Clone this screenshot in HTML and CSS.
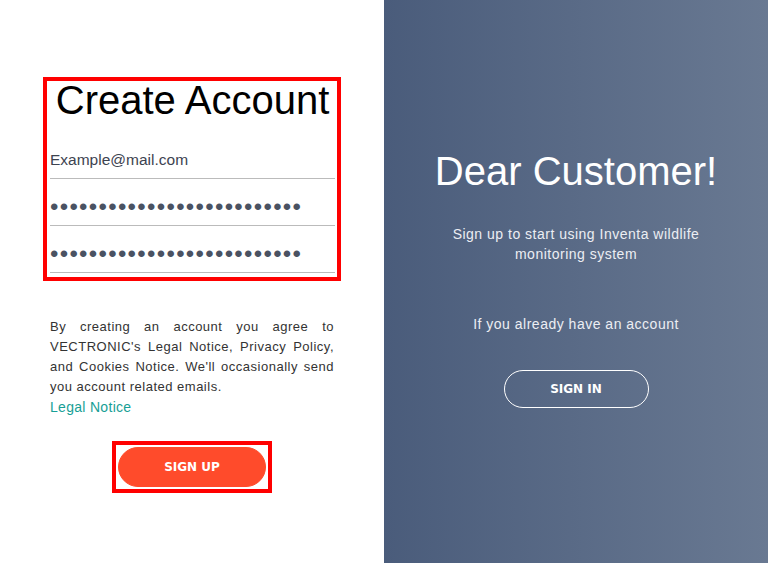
FILE: index.html
```html
<!DOCTYPE html>
<html lang="en">
<head>
    <meta charset="UTF-8">
    <meta name="viewport" content="width=device-width, initial-scale=1.0">
    <title>Create Account</title>
    <link rel="stylesheet" href="styles.css">
</head>
<body>
    <div class="container">
        <div class="sign-up">
            <form class="form-box">
                <h1>Create Account</h1>
                <input type="email" class="field" value="Example@mail.com">
                <input type="password" class="field secret" value="abcdefghijklmnopqrstuvwxyz">
                <input type="password" class="field secret" value="abcdefghijklmnopqrstuvwxyz">
            </form>

            <p class="terms">By creating an account you agree to VECTRONIC's Legal Notice, Privacy Policy, and Cookies Notice. We'll occasionally send you account related emails.</p>
            <a href="#" class="legal">Legal Notice</a>

            <div class="button-box">
                <button class="btn btn-primary">Sign Up</button>
            </div>
        </div>

        <div class="overlay">
            <h1>Dear Customer!</h1>
            <p class="intro">Sign up to start using Inventa wildlife monitoring system</p>
            <p class="already">If you already have an account</p>
            <button class="btn btn-ghost">Sign In</button>
        </div>
    </div>
</body>
</html>
```

FILE: styles.css
```css
* {
    box-sizing: border-box;
}
body {
    margin: 0;
    font-family: "Liberation Sans", Arial, sans-serif;
    background: #fff;
}
.container {
    display: flex;
    width: 768px;
    height: 563px;
}
.sign-up {
    width: 384px;
    padding: 77px 50px 0;
    display: flex;
    flex-direction: column;
}
.form-box {
    margin: 0 -7px 0 -7px;
    border: 4px solid #ff0000;
    padding: 0 2px 4px 3px;
}
.form-box h1 {
    margin: 0 0 23px;
    font-size: 40px;
    line-height: 38px;
    font-weight: normal;
    text-align: center;
    color: #000;
}
.field {
    display: block;
    width: 100%;
    height: 37px;
    margin-top: 10px;
    padding: 0;
    border: none;
    border-bottom: 1px solid #bbb;
    background: transparent;
    outline: none;
    font-family: "Liberation Sans", Arial, sans-serif;
    font-size: 15.5px;
    color: #3d4350;
}
.secret {
    font-size: 24px;
    letter-spacing: 1.3px;
    color: #4a5262;
}
.terms {
    margin: 36px 0 0;
    font-size: 13px;
    line-height: 20px;
    letter-spacing: 0.5px;
    text-align: justify;
    color: #333;
}
.legal {
    font-size: 14px;
    line-height: 20px;
    letter-spacing: 0.3px;
    color: #17a096;
    text-decoration: none;
}
.button-box {
    align-self: center;
    margin-top: 24px;
    border: 4px solid #ff0000;
    padding: 2px;
}
.btn {
    display: block;
    border-radius: 20px;
    padding: 0;
    font-family: "DejaVu Sans", Verdana, sans-serif;
    font-size: 12px;
    line-height: 14px;
    font-weight: bold;
    text-transform: uppercase;
    color: #fff;
    cursor: pointer;
}
.btn-primary {
    width: 148px;
    height: 40px;
    border: 1px solid #ff4b2b;
    background: #ff4b2b;
}
.overlay {
    width: 384px;
    padding-top: 148px;
    display: flex;
    flex-direction: column;
    align-items: center;
    text-align: center;
    color: #fff;
    background: linear-gradient(to right, #4a5c7b, #697992);
}
.overlay h1 {
    margin: 0;
    font-size: 40px;
    line-height: 46px;
    font-weight: normal;
}
.intro {
    margin: 30px 0 0;
    width: 270px;
    font-size: 14px;
    line-height: 20px;
    letter-spacing: 0.5px;
    color: #eceef3;
}
.already {
    margin: 50px 0 0;
    font-size: 14px;
    line-height: 20px;
    letter-spacing: 0.5px;
    color: #eceef3;
}
.btn-ghost {
    margin-top: 36px;
    width: 145px;
    height: 38px;
    border: 1px solid #fff;
    background: transparent;
}
```
